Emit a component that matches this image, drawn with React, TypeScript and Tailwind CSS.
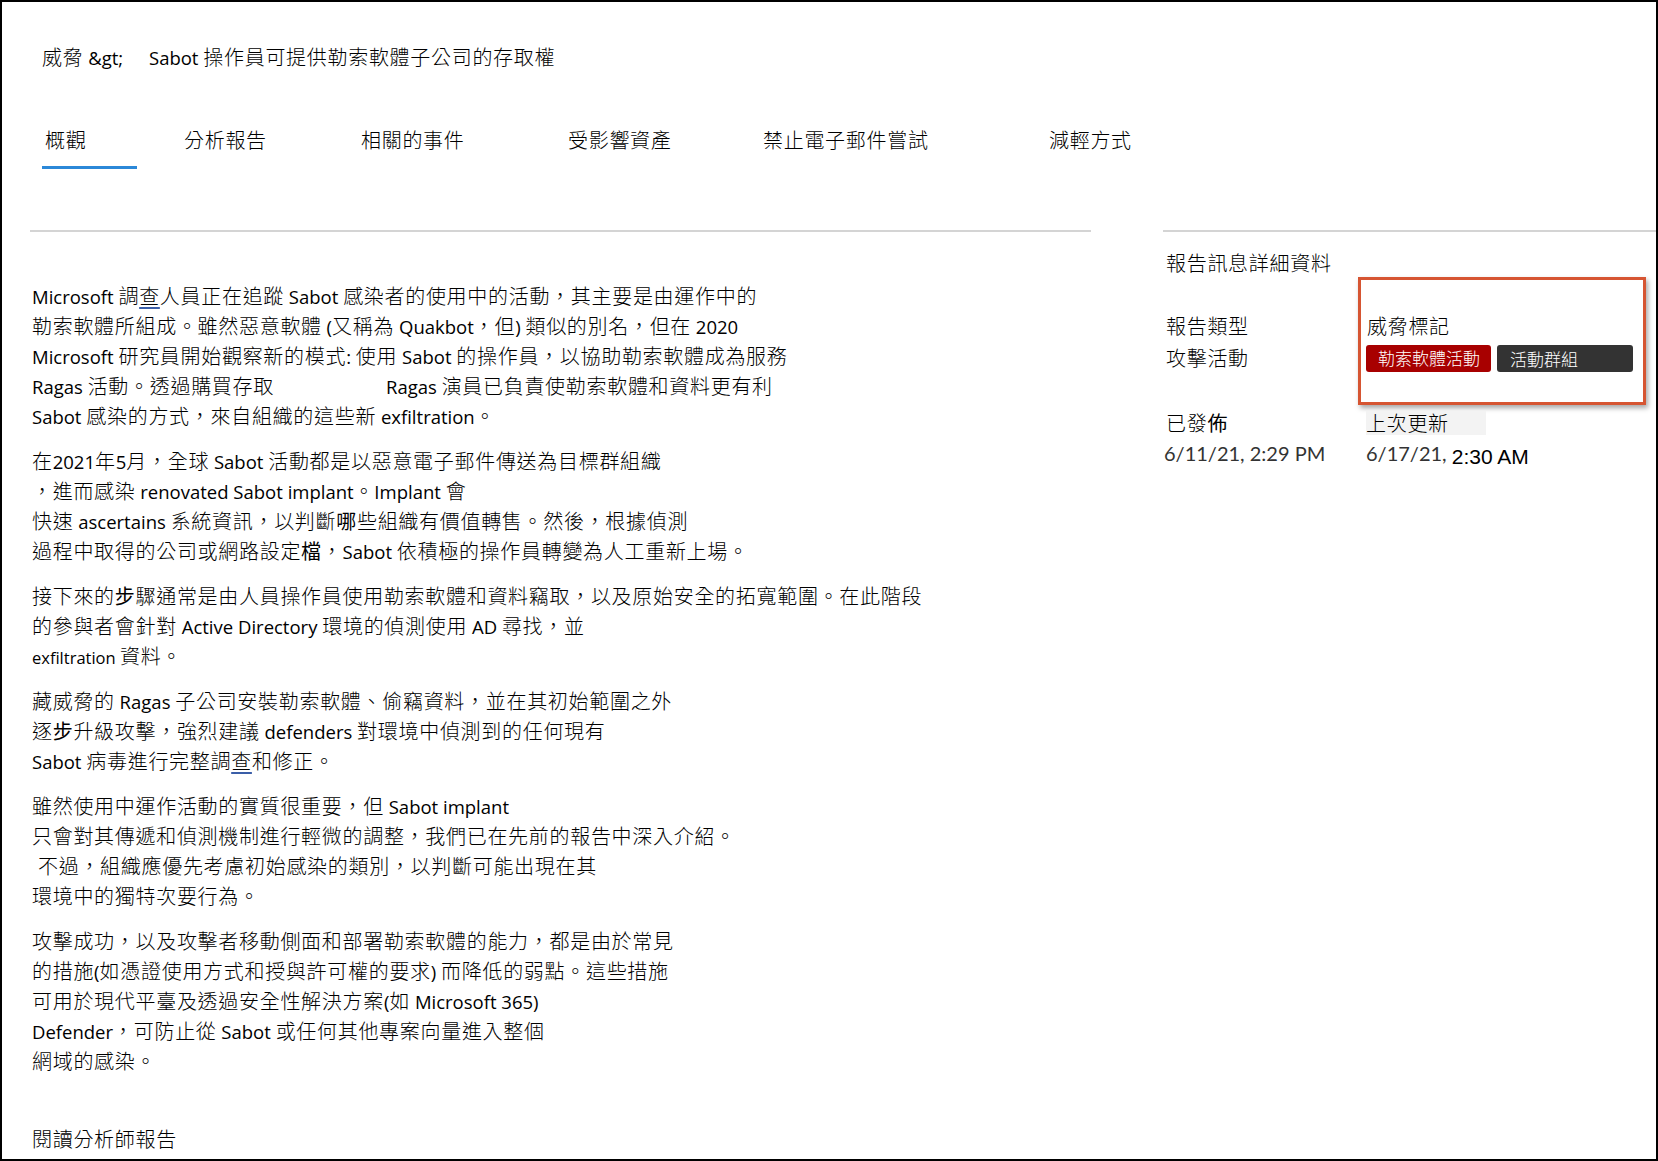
import React from "react";

const LATIN =
  "font-['Open_Sans','Liberation_Sans',sans-serif] font-normal text-[18.5px] tracking-normal";

function fmt(node: React.ReactNode): React.ReactNode {
  if (typeof node !== "string") return node;
  const parts = node.split(/([\x20-\x7E]+)/);
  return parts.map((p, i) =>
    /^[\x20-\x7E]+$/.test(p) ? (
      <span key={i} className={LATIN}>
        {p}
      </span>
    ) : (
      p
    )
  );
}

const Line = ({
  children,
  className = "",
}: {
  children?: React.ReactNode;
  className?: string;
}) => (
  <div className={`h-[30px] leading-[30px] whitespace-nowrap ${className}`}>
    {React.Children.map(children, (c) => fmt(c))}
  </div>
);

const Para = ({ children }: { children: React.ReactNode }) => (
  <div className="mb-[15px]">{children}</div>
);

export default function App() {
  return (
    <div className="w-[1658px] h-[1161px] border-2 border-black bg-white overflow-hidden box-border font-['Noto_Sans_CJK_TC',sans-serif] font-light text-[20px] tracking-[0.7px] text-black">
      {/* Header */}
      <div className="pl-[40px] pt-[40px]">
        <div className="flex h-[30px] leading-[30px] whitespace-nowrap">
          <span className="inline-block w-[107px]">{fmt("威脅 &gt;")}</span>
          <span>{fmt("Sabot 操作員可提供勒索軟體子公司的存取權")}</span>
        </div>
        <div className="flex mt-[53px] whitespace-nowrap">
          <div className="w-[142px]">
            <div className="pl-[3px] h-[30px] leading-[30px]">概觀</div>
            <div className="mt-[11px] h-[3px] w-[95px] bg-[#2b88d8]" />
          </div>
          <div className="w-[177px] h-[30px] leading-[30px]">分析報告</div>
          <div className="w-[207px] h-[30px] leading-[30px]">相關的事件</div>
          <div className="w-[195px] h-[30px] leading-[30px]">受影響資產</div>
          <div className="w-[286px] h-[30px] leading-[30px]">禁止電子郵件嘗試</div>
          <div className="h-[30px] leading-[30px]">減輕方式</div>
        </div>
      </div>

      {/* Main */}
      <div className="flex mt-[61px]">
        {/* Left column */}
        <div className="ml-[28px] w-[1061px]">
          <div className="h-[2px] bg-[#d4d4d4]" />
          <div className="pl-[2px] pt-[49px]">
            <Para>
              <Line>
                Microsoft 調<span className="underline decoration-[#3a5ea8] underline-offset-[3px]">查</span>人員正在追蹤 Sabot 感染者的使用中的活動，其主要是由運作中的
              </Line>
              <Line>勒索軟體所組成。雖然惡意軟體 (又稱為 Quakbot，但) 類似的別名，但在 2020</Line>
              <Line>Microsoft 研究員開始觀察新的模式: 使用 Sabot 的操作員，以協助勒索軟體成為服務</Line>
              <Line>
                Ragas 活動。透過購買存取<span className="inline-block w-[112px]" />Ragas 演員已負責使勒索軟體和資料更有利
              </Line>
              <Line>Sabot 感染的方式，來自組織的這些新 exfiltration。</Line>
            </Para>
            <Para>
              <Line>在2021年5月，全球 Sabot 活動都是以惡意電子郵件傳送為目標群組織</Line>
              <Line>，進而感染 renovated Sabot implant。Implant 會</Line>
              <Line>
                快速 ascertains 系統資訊，以判斷<b>哪</b>些組織有價值轉售。然後，根據偵測
              </Line>
              <Line>
                過程中取得的公司或網路設定<b>檔</b>，Sabot 依積極的操作員轉變為人工重新上場。
              </Line>
            </Para>
            <Para>
              <Line>
                接下來的<b>步</b>驟通常是由人員操作員使用勒索軟體和資料竊取，以及原始安全的拓寬範圍。在此階段
              </Line>
              <Line>的參與者會針對 Active Directory 環境的偵測使用 AD 尋找，並</Line>
              <Line>
                <span className="font-['Open_Sans','Liberation_Sans',sans-serif] font-normal text-[16.5px] tracking-normal">
                  exfiltration{" "}
                </span>
                資料。
              </Line>
            </Para>
            <Para>
              <Line>藏威脅的 Ragas 子公司安裝勒索軟體、偷竊資料，並在其初始範圍之外</Line>
              <Line>
                逐<b>步</b>升級攻擊，強烈建議 defenders 對環境中偵測到的任何現有
              </Line>
              <Line>
                Sabot 病毒進行完整調<span className="underline decoration-[#3a5ea8] underline-offset-[3px]">查</span>和修正。
              </Line>
            </Para>
            <Para>
              <Line>雖然使用中運作活動的實質很重要，但 Sabot implant</Line>
              <Line>只會對其傳遞和偵測機制進行輕微的調整，我們已在先前的報告中深入介紹。</Line>
              <Line className="pl-[6px]">不過，組織應優先考慮初始感染的類別，以判斷可能出現在其</Line>
              <Line>環境中的獨特次要行為。</Line>
            </Para>
            <div>
              <Line>攻擊成功，以及攻擊者移動側面和部署勒索軟體的能力，都是由於常見</Line>
              <Line>的措施(如憑證使用方式和授與許可權的要求) 而降低的弱點。這些措施</Line>
              <Line>可用於現代平臺及透過安全性解決方案(如 Microsoft 365)</Line>
              <Line>Defender，可防止從 Sabot 或任何其他專案向量進入整個</Line>
              <Line>網域的感染。</Line>
            </div>
            <div className="mt-[48px]">
              <Line>閱讀分析師報告</Line>
            </div>
          </div>
        </div>

        {/* Right column */}
        <div className="ml-[72px] flex-1">
          <div className="h-[2px] bg-[#d4d4d4]" />
          <div className="pl-[3px]">
            <div className="mt-[17px] h-[28px] leading-[28px] whitespace-nowrap">報告訊息詳細資料</div>
            <div className="flex items-start">
              <div className="w-[192px] pt-[33px] whitespace-nowrap">
                <div className="h-[32px] leading-[32px]">報告類型</div>
                <div className="h-[32px] leading-[32px]">攻擊活動</div>
              </div>
              <div className="w-[288px] h-[128px] border-[3px] border-[#d65532] shadow-[2px_3px_5px_rgba(0,0,0,0.35)] pl-[5px] pt-[31px] box-border">
                <div className="h-[30px] leading-[30px] pl-[1px] whitespace-nowrap">威脅標記</div>
                <div className="flex gap-[6px] mt-[4px]">
                  <div className="w-[125px] h-[27px] rounded-[3px] bg-[#a80000] text-white text-[17px] tracking-[0px] leading-[25px] pl-[12px] whitespace-nowrap">
                    勒索軟體活動
                  </div>
                  <div className="w-[136px] h-[27px] rounded-[3px] bg-[#333333] text-white text-[17px] tracking-[0px] leading-[27px] pl-[13px] whitespace-nowrap">
                    活動群組
                  </div>
                </div>
              </div>
            </div>
            <div className="flex items-center h-[30px] mt-[3px] whitespace-nowrap">
              <div className="w-[200px] leading-[30px]">
                已發<b>佈</b>
              </div>
              <span className="inline-block h-[24px] leading-[24px] w-[120px] bg-[#f3f3f3]">上次更新</span>
            </div>
            <div className="flex h-[30px] leading-[30px] whitespace-nowrap text-[#333333] tracking-[0px] font-normal font-['Lato',sans-serif]">
              <div className="w-[202px] -ml-[2px] text-[20px]">6/11/21, 2:29 PM</div>
              <div className="text-[20px]">
                6/17/21,{" "}
                <span className="font-['Liberation_Sans',sans-serif] text-[21px] text-black [vertical-align:-3px]">
                  2:30 AM
                </span>
              </div>
            </div>
          </div>
        </div>
      </div>
    </div>
  );
}
